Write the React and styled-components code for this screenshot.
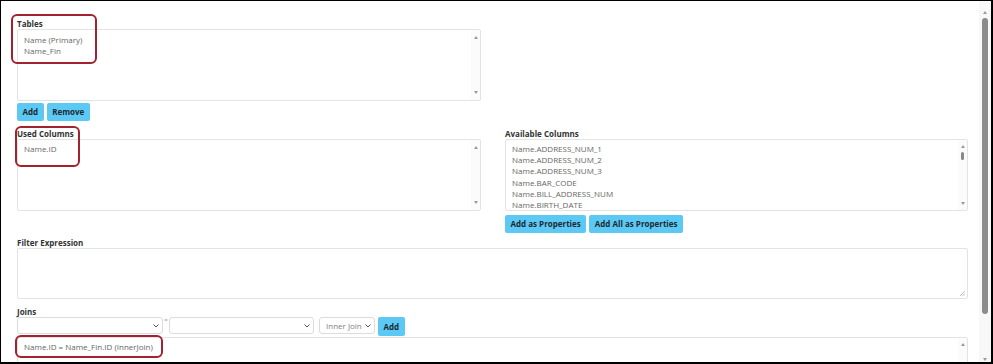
import styled, { createGlobalStyle } from "styled-components";

const GlobalStyle = createGlobalStyle`
  html, body {
    margin: 0;
    padding: 0;
    background: #fff;
  }
  body {
    font-family: "Open Sans", "Liberation Sans", sans-serif;
  }
`;

const Frame = styled.div`
  width: 993px;
  height: 364px;
  box-sizing: border-box;
  border: 1px solid #000;
  border-right-width: 2px;
  border-bottom-width: 2px;
  display: flex;
  overflow: hidden;
  background: #fff;
`;
const Content = styled.div`
  flex: 1;
  min-width: 0;
  padding: 17px 11px 0 16px;
  display: flex;
  flex-direction: column;
`;
const PageScroll = styled.div`
  width: 12px;
  background: #f8f8f8;
  display: flex;
  flex-direction: column;
  align-items: center;
  padding: 10px 0 1px;
  box-sizing: border-box;
`;
const PageThumb = styled.div`
  width: 6px;
  height: 296px;
  margin-top: 4px;
  border-radius: 3px;
  background: #8c8c8c;
`;
const Spacer = styled.div`
  flex: 1;
`;
const Arrow = styled.span`
  width: 0;
  height: 0;
  border-left: 2.5px solid transparent;
  border-right: 2.5px solid transparent;
  ${(p) =>
    p.down ? "border-top: 3px solid #9a9a9a;" : "border-bottom: 3px solid #9a9a9a;"}
`;

const Section = styled.div`
  position: relative;
  width: ${(p) => p.w || "auto"};
  margin-top: ${(p) => p.mt || 0}px;
  display: flex;
  flex-direction: column;
`;
const Columns = styled.div`
  display: grid;
  grid-template-columns: 464px 463px;
  column-gap: 24px;
  margin-top: 7px;
  align-items: start;
`;
const Label = styled.div`
  font-size: 8px;
  line-height: 11px;
  height: 11px;
  font-weight: 700;
  color: #333;
  white-space: nowrap;
`;
const ListBox = styled.div`
  height: ${(p) => p.h}px;
  border: 1px solid #e3e3e3;
  border-radius: 2px;
  box-sizing: border-box;
  display: flex;
  overflow: hidden;
  background: #fff;
`;
const Items = styled.div`
  flex: 1;
  padding: ${(p) => p.pt || 3}px 6px 0;
  font-size: 8px;
  line-height: ${(p) => p.lh || 11}px;
  color: #666;
  white-space: nowrap;
`;
const Track = styled.div`
  width: 9px;
  display: flex;
  flex-direction: column;
  align-items: center;
  padding: ${(p) => p.pad || 6}px 0;
  background: #fbfbfb;
`;
const InnerThumb = styled.div`
  width: 3px;
  height: 8px;
  margin-top: 4px;
  border-radius: 2px;
  background: #888;
`;
const ButtonRow = styled.div`
  display: flex;
  gap: 3px;
  margin-top: ${(p) => p.mt || 2}px;
`;
const Button = styled.button`
  height: ${(p) => p.h || 18}px;
  padding: 0 5.5px;
  border: none;
  border-radius: 2px;
  background: #5cc9f5;
  color: #1e2a30;
  font-family: inherit;
  font-size: 8px;
  font-weight: 700;
  line-height: ${(p) => p.h || 18}px;
  white-space: nowrap;
  cursor: pointer;
`;
const TextArea = styled.div`
  height: 51px;
  border: 1px solid #e3e3e3;
  border-radius: 2px;
  box-sizing: border-box;
  display: flex;
  align-items: flex-end;
  justify-content: flex-end;
  padding: 0 2px 2px 0;
`;
const JoinRow = styled.div`
  display: flex;
  align-items: flex-start;
  height: 19px;
`;
const Select = styled.div`
  width: ${(p) => p.w}px;
  height: 17px;
  margin-right: ${(p) => p.mr || 0}px;
  border: 1px solid #dcdcdc;
  border-radius: 3px;
  box-sizing: border-box;
  display: flex;
  align-items: center;
  justify-content: space-between;
  gap: 3px;
  padding: 0 3px 0 6px;
  font-size: 8px;
  line-height: 15px;
  color: #808080;
  white-space: nowrap;
`;
const Equals = styled.span`
  width: 6px;
  font-size: 6px;
  line-height: 6px;
  color: #999;
  text-align: center;
`;
const Annotation = styled.div`
  position: absolute;
  left: ${(p) => p.x}px;
  top: ${(p) => p.y}px;
  width: ${(p) => p.w}px;
  height: ${(p) => p.h}px;
  box-sizing: border-box;
  border: 2px solid #a3222f;
  border-radius: 6px;
  pointer-events: none;
`;

const Chevron = () => (
  <svg width="6" height="4" viewBox="0 0 6 4">
    <polyline points="0.5,0.5 3,3 5.5,0.5" fill="none" stroke="#555" strokeWidth="1" />
  </svg>
);

const Grip = () => (
  <svg width="6" height="6" viewBox="0 0 6 6">
    <line x1="1" y1="6" x2="6" y2="1" stroke="#aaa" strokeWidth="0.8" />
    <line x1="3.5" y1="6" x2="6" y2="3.5" stroke="#aaa" strokeWidth="0.8" />
  </svg>
);

const available = [
  "Name.ADDRESS_NUM_1",
  "Name.ADDRESS_NUM_2",
  "Name.ADDRESS_NUM_3",
  "Name.BAR_CODE",
  "Name.BILL_ADDRESS_NUM",
  "Name.BIRTH_DATE",
];

export default function App() {
  return (
    <>
      <GlobalStyle />
      <Frame>
        <Content>
          <Section w="464px">
            <Label>Tables</Label>
            <ListBox h={72}>
              <Items pt={4}>
                <div>Name (Primary)</div>
                <div>Name_Fin</div>
              </Items>
              <Track>
                <Arrow />
                <Spacer />
                <Arrow down />
              </Track>
            </ListBox>
            <ButtonRow>
              <Button>Add</Button>
              <Button>Remove</Button>
            </ButtonRow>
            <Annotation x={-6} y={-4} w={86} h={50} />
          </Section>

          <Columns>
            <Section>
              <Label>Used Columns</Label>
              <ListBox h={72}>
                <Items pt={3}>
                  <div>Name.ID</div>
                </Items>
                <Track>
                  <Arrow />
                  <Spacer />
                  <Arrow down />
                </Track>
              </ListBox>
              <Annotation x={-2} y={-2} w={65} h={41} />
            </Section>
            <Section>
              <Label>Available Columns</Label>
              <ListBox h={72}>
                <Items pt={3} lh={11.2}>
                  {available.map((c) => (
                    <div key={c}>{c}</div>
                  ))}
                </Items>
                <Track pad={5}>
                  <Arrow />
                  <InnerThumb />
                  <Spacer />
                  <Arrow down />
                </Track>
              </ListBox>
              <ButtonRow mt={4}>
                <Button>Add as Properties</Button>
                <Button>Add All as Properties</Button>
              </ButtonRow>
            </Section>
          </Columns>

          <Section mt={4}>
            <Label>Filter Expression</Label>
            <TextArea>
              <Grip />
            </TextArea>
          </Section>

          <Section mt={7}>
            <Label>Joins</Label>
            <JoinRow>
              <Select w={146}>
                <span />
                <Chevron />
              </Select>
              <Equals>=</Equals>
              <Select w={145} mr={5}>
                <span />
                <Chevron />
              </Select>
              <Select w={56} mr={3}>
                <span>Inner Join</span>
                <Chevron />
              </Select>
              <Button h={19}>Add</Button>
            </JoinRow>
          </Section>

          <Section mt={1}>
            <ListBox h={40}>
              <Items pt={3}>
                <div>Name.ID = Name_Fin.ID (InnerJoin)</div>
              </Items>
              <Track pad={5}>
                <Arrow />
                <Spacer />
              </Track>
            </ListBox>
            <Annotation x={-2} y={-2} w={148} h={23} />
          </Section>
        </Content>
        <PageScroll>
          <Arrow />
          <PageThumb />
          <Spacer />
          <Arrow down />
        </PageScroll>
      </Frame>
    </>
  );
}
